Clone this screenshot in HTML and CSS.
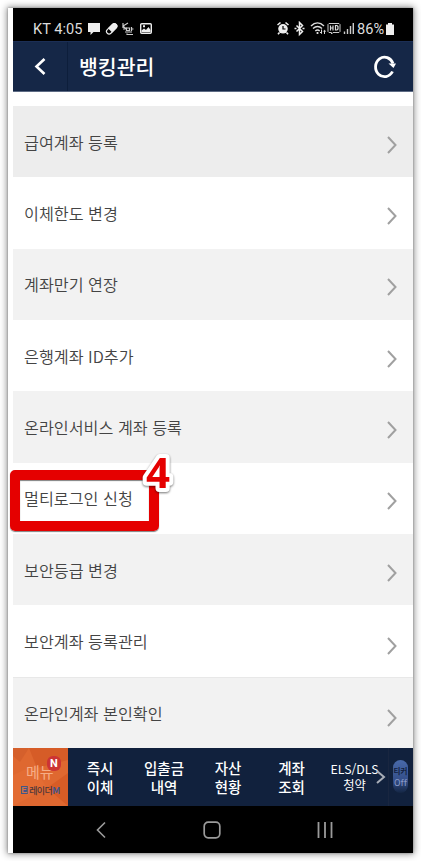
FILE: index.html
```
<!DOCTYPE html>
<html lang="ko">
<head>
  <meta charset="UTF-8" />
  <meta name="viewport" content="width=device-width, initial-scale=1.0"/>
  <title>뱅킹관리</title>
  <link rel="stylesheet" href="styles.css">
</head>
<body>

  <div class="phone">
    <div class="status">
      <span class="carrier">KT 4:05</span>
      <svg class="notify-icons" width="68" height="16" viewBox="0 0 68 16">
        <path d="M0 2h12v9H5.500l-3 3v-3H0z" fill="#eee"/>
        <g transform="rotate(-45 23.500 8)">
          <rect x="17.500" y="5.400" width="12.500" height="5.200" rx="2.600" fill="none" stroke="#eee" stroke-width="1.100"/>
          <path d="M21.500 5h6a3 3 0 0 1 0 6h-6z" fill="#eee"/>
        </g>
        <g fill="none" stroke="#ccc" stroke-width="1.200">
          <path d="M35 2v5M40 2l-5 3 3 3M35 8l4-1"/>
          <path d="M38.500 7h3v2.500h-3zM43.500 6v4M43.500 8h2M37 11h7M39 12.500v1h6"/>
        </g>
        <rect x="52.700" y="2.700" width="10.600" height="9.600" rx="1" fill="none" stroke="#eee" stroke-width="1.400"/>
        <path d="M53.500 11v-1.500l2.500-2 2 1.500 2.500-3 2 3v2zM55 4.300h2v2h-2z" fill="#eee"/>
      </svg>
      <svg class="signal-icons" width="80" height="16" viewBox="0 0 80 16">
        <!-- alarm -->
        <circle cx="6" cy="7.800" r="4.800" fill="#eee"/>
        <path d="M.5 4l3-2.500M11.500 4l-3-2.500M2.500 11.500L1 13.200M9.500 11.500l1.500 1.700" stroke="#eee" stroke-width="1.600"/>
        <path d="M6 5v3h2.500" fill="none" stroke="#000" stroke-width="1.200"/>
        <!-- bluetooth -->
        <path d="M19.500 4.500l6 6-3 3v-12l3 3-6 6M17.500 7.500h2M25.500 7.500h2" fill="none" stroke="#eee" stroke-width="1.500"/>
        <!-- wifi -->
        <g fill="none" stroke="#ddd" stroke-width="1.400">
          <path d="M34 5c4-4 9-4 13 0M36 7.500c3-2.700 6-2.700 9 0M38.300 10c1.500-1.300 3-1.300 4.400 0"/>
          <path d="M44.500 8.500v4M43 11l1.500 1.500M47.500 13V9.500M46.300 10.500l1.200-1.200 1.300 1.200" stroke-width="1"/>
        </g>
        <circle cx="40.500" cy="12" r="1.100" fill="#eee"/>
        <!-- hd -->
        <path d="M52 2.500h10l1 1v7l-1 1h-6l-1.500 1.500v-1.500H52l-1-1v-7z" fill="none" stroke="#ccc"/>
        <path d="M53.500 4.500v5M56 4.500v5M53.500 7H56M58.500 4.500V9h1.500l1-1v-2.500l-1-1z" fill="none" stroke="#ddd" stroke-width="1.200"/>
        <!-- reception -->
        <path d="M67.500 10.500V13M70.500 8v5M73.500 5v8M76.300 2v11" stroke="#ccc" stroke-width="1.400"/>
      </svg>
      <span class="percent">86%</span>
      <svg class="battery" width="8" height="12" viewBox="0 0 8 12">
        <path d="M2 0h4v1.500h2V12H0V1.500h2z" fill="#eee"/>
      </svg>
    </div>

    <header class="title-bar">
      <a class="back">
        <svg width="12" height="20" viewBox="0 0 12 20"><path d="M10.500 2L2.500 9.500l8 7.500" fill="none" stroke="#fff" stroke-width="2.600"/></svg>
      </a>
      <h1>뱅킹관리</h1>
      <svg class="refresh" width="24" height="26" viewBox="0 0 24 26">
        <path d="M19.500 17.500A9 9.800 0 1 1 20 9.500" fill="none" stroke="#fff" stroke-width="2.800"/>
        <path d="M15.500 9.500h7.500l-2.500 4.500z" fill="#fff"/>
      </svg>
    </header>

    <ul class="menu">
      <li class="pressed">급여계좌 등록<svg class="arrow" viewBox="0 0 10 18"><path d="M1 1l7.500 8L1 17"/></svg></li>
      <li>이체한도 변경<svg class="arrow" viewBox="0 0 10 18"><path d="M1 1l7.500 8L1 17"/></svg></li>
      <li>계좌만기 연장<svg class="arrow" viewBox="0 0 10 18"><path d="M1 1l7.500 8L1 17"/></svg></li>
      <li>은행계좌 ID추가<svg class="arrow" viewBox="0 0 10 18"><path d="M1 1l7.500 8L1 17"/></svg></li>
      <li>온라인서비스 계좌 등록<svg class="arrow" viewBox="0 0 10 18"><path d="M1 1l7.500 8L1 17"/></svg></li>
      <li>멀티로그인 신청<svg class="arrow" viewBox="0 0 10 18"><path d="M1 1l7.500 8L1 17"/></svg>
        <div class="mark">
          <svg class="step" width="40" height="48" viewBox="0 0 40 48"><text x="6" y="37">4</text></svg>
        </div>
      </li>
      <li>보안등급 변경<svg class="arrow" viewBox="0 0 10 18"><path d="M1 1l7.500 8L1 17"/></svg></li>
      <li>보안계좌 등록관리<svg class="arrow low" viewBox="0 0 10 18"><path d="M1 1l7.500 8L1 17"/></svg></li>
      <li>온라인계좌 본인확인<svg class="arrow low" viewBox="0 0 10 18"><path d="M1 1l7.500 8L1 17"/></svg></li>
    </ul>

    <nav class="quick">
      <a class="home">
        <svg class="facets" width="55" height="58" viewBox="0 0 55 58">
          <path d="M0 0h16L7 14 0 8z" fill="#d5602c"/>
          <path d="M16 0h39v12L24 20z" fill="#d65c27"/>
          <path d="M0 27l20-9 14 22-34 18z" fill="#e36c33"/>
          <path d="M55 25L34 40l21 18z" fill="#d75c26"/>
        </svg>
        <span class="home-label">메뉴</span>
        <span class="brand"><b class="tile">티</b>레이더<b>M</b></span>
        <span class="badge">N</span>
      </a>
      <a>즉시<br>이체</a>
      <a>입출금<br>내역</a>
      <a>자산<br>현황</a>
      <a>계좌<br>조회</a>
      <a class="small">ELS/DLS<br>청약
        <svg class="more" width="10" height="16" viewBox="0 0 10 16"><path d="M1 2l7 6-7 6" fill="none" stroke="#a9aeb8" stroke-width="2"/></svg>
      </a>
      <div class="ticker"><span class="pill"><span class="pill-name">티커</span>Off</span></div>
    </nav>

    <div class="system">
      <svg width="10" height="18" viewBox="0 0 10 18"><path d="M9 1.500L1.500 9 9 16.500" fill="none" stroke="#9b9b9b" stroke-width="1.600"/></svg>
      <svg width="18" height="18" viewBox="0 0 18 18"><rect x="1.200" y="1.200" width="15.600" height="15.600" rx="4" fill="none" stroke="#9b9b9b" stroke-width="1.700"/></svg>
      <svg width="16" height="18" viewBox="0 0 16 18"><path d="M1.500 1v16M8 1v16M14.500 1v16" stroke="#9b9b9b" stroke-width="1.800"/></svg>
    </div>
  </div>

</body>
</html>
```

FILE: styles.css
```
* {
  box-sizing: border-box;
}

body {
  margin: 0;
  padding: 8px;
  height: 861px;
  overflow: hidden;
  background: #fff;
  font-family: "Noto Sans CJK KR", "Noto Sans", sans-serif;
}

.phone {
  width: 405px;
  height: 845px;
  padding-left: 5px;
  background: #fff;
  box-shadow: 0 0 2px #888, 0 0 7px 1px rgba(0,0,0,0.45);
  display: flex;
  flex-direction: column;
}

.status {
  height: 33px;
  flex: none;
  background: #000;
  color: #ddd;
  display: flex;
  align-items: center;
  padding: 8px 19px 0 20px;
  font: 14.6px Roboto, sans-serif;
}

.carrier {
  width: 50px;
  white-space: nowrap;
}

.notify-icons {
  margin-left: 5px;
}

.signal-icons {
  margin-left: auto;
}

.percent {
  width: 27px;
  margin: 0 2px 0 0;
  font-size: 14.6px;
}

.title-bar {
  height: 51px;
  flex: none;
  background: #152747;
  border-top: 1px solid #1b2e55;
  border-bottom: 1px solid #5d6b84;
  display: flex;
  align-items: center;
  padding-right: 16px;
}

.back {
  width: 55px;
  height: 100%;
  border-right: 1px solid #0d1e3b;
  display: flex;
  align-items: center;
  justify-content: center;
}

.title-bar h1 {
  margin: 0 0 0 11px;
  color: #fff;
  font-size: 20.5px;
  font-weight: 500;
  line-height: 1;
}

.refresh {
  margin-left: auto;
}

.menu {
  list-style: none;
  margin: 0;
  padding: 14px 0 0;
  height: 656px;
  flex: none;
  display: grid;
  grid-template-rows: repeat(9, 1fr);
}

.menu li {
  position: relative;
  display: flex;
  align-items: center;
  justify-content: space-between;
  padding: 0 16px 0 11px;
  color: #444;
  font-size: 16.2px;
  font-weight: 350;
  line-height: 24px;
}

.menu li:nth-child(odd) {
  background: #f2f2f2;
}

.menu li.pressed {
  background: #ededed;
}

.menu li:last-child {
  border-top: 1px solid #e8e8e8;
}

.arrow {
  width: 10px;
  height: 18px;
  margin-top: 6px;
  fill: none;
  stroke: #a0a0a0;
  stroke-width: 2;
}

.arrow.low {
  margin-top: 11px;
}

.mark {
  position: absolute;
  left: -3px;
  top: 7px;
  width: 149px;
  height: 61px;
  border: 10px solid #e50000;
  border-radius: 5px;
  box-shadow: 0 1px 1px rgba(0,0,0,0.5), inset 0 1px 1px rgba(0,0,0,0.5);
  z-index: 1;
}

.step {
  position: absolute;
  left: 120px;
  top: -29px;
  overflow: visible;
  fill: #e50000;
  stroke: #fff;
  stroke-width: 8px;
  stroke-linejoin: round;
  paint-order: stroke;
  font: bold 42px "Noto Sans", sans-serif;
  filter: drop-shadow(0 1px 1px rgba(0,0,0,0.55));
}

.quick {
  height: 58px;
  flex: none;
  background: #11213d;
  color: #fff;
  display: grid;
  grid-template-columns: 55px 64px 64px 64px 63px 65px 25px;
}

.quick a {
  position: relative;
  text-align: center;
  font-size: 14.5px;
  font-weight: 500;
  line-height: 19px;
  padding-top: 10px;
  white-space: nowrap;
}

.quick a.small {
  font-size: 12.3px;
  font-weight: 400;
  line-height: 16px;
  padding: 13px 2px 0 0;
}

.small .more {
  position: absolute;
  right: 2px;
  top: 21px;
}

.quick a.home {
  background: #df6830;
  display: flex;
  flex-direction: column;
  align-items: flex-start;
  padding-top: 14px;
}

.facets {
  position: absolute;
  left: 0;
  top: 0;
}

.home-label {
  position: relative;
  color: #f6ad86;
  font-size: 15px;
  font-weight: 400;
  line-height: 20px;
  margin-left: 13px;
}

.brand {
  position: relative;
  color: #4b363a;
  font-size: 9px;
  line-height: 9px;
  letter-spacing: -0.6px;
  margin: 4px 0 0 8px;
}

.brand b {
  color: #43558a;
  font-size: 9.5px;
}

.brand .tile {
  display: inline-block;
  height: 8px;
  line-height: 8px;
  background: #43558a;
  color: #d9733f;
}

.badge {
  position: absolute;
  left: 34px;
  top: 8px;
  width: 14px;
  height: 15px;
  border-radius: 6px;
  background: #cc3434;
  color: #fff;
  font: bold 11px/15px Roboto, sans-serif;
}

.ticker {
  padding: 12px 0 0 4px;
  border-left: 1px solid #192640;
}

.pill {
  width: 15px;
  height: 33px;
  border-radius: 8px;
  background: linear-gradient(#496aaa, #344f8a 60%, #142644);
  color: #8799c6;
  display: flex;
  flex-direction: column;
  align-items: center;
  padding-top: 7px;
  font: 9.5px/11px Roboto, "Noto Sans CJK KR", sans-serif;
}

.pill-name {
  color: #12213f;
  font-size: 7.5px;
  font-weight: bold;
  line-height: 10px;
  white-space: nowrap;
}

.system {
  height: 47px;
  flex: none;
  background: #000;
  display: flex;
  align-items: center;
  justify-content: space-between;
  padding: 1px 80px 0 83px;
}
```
